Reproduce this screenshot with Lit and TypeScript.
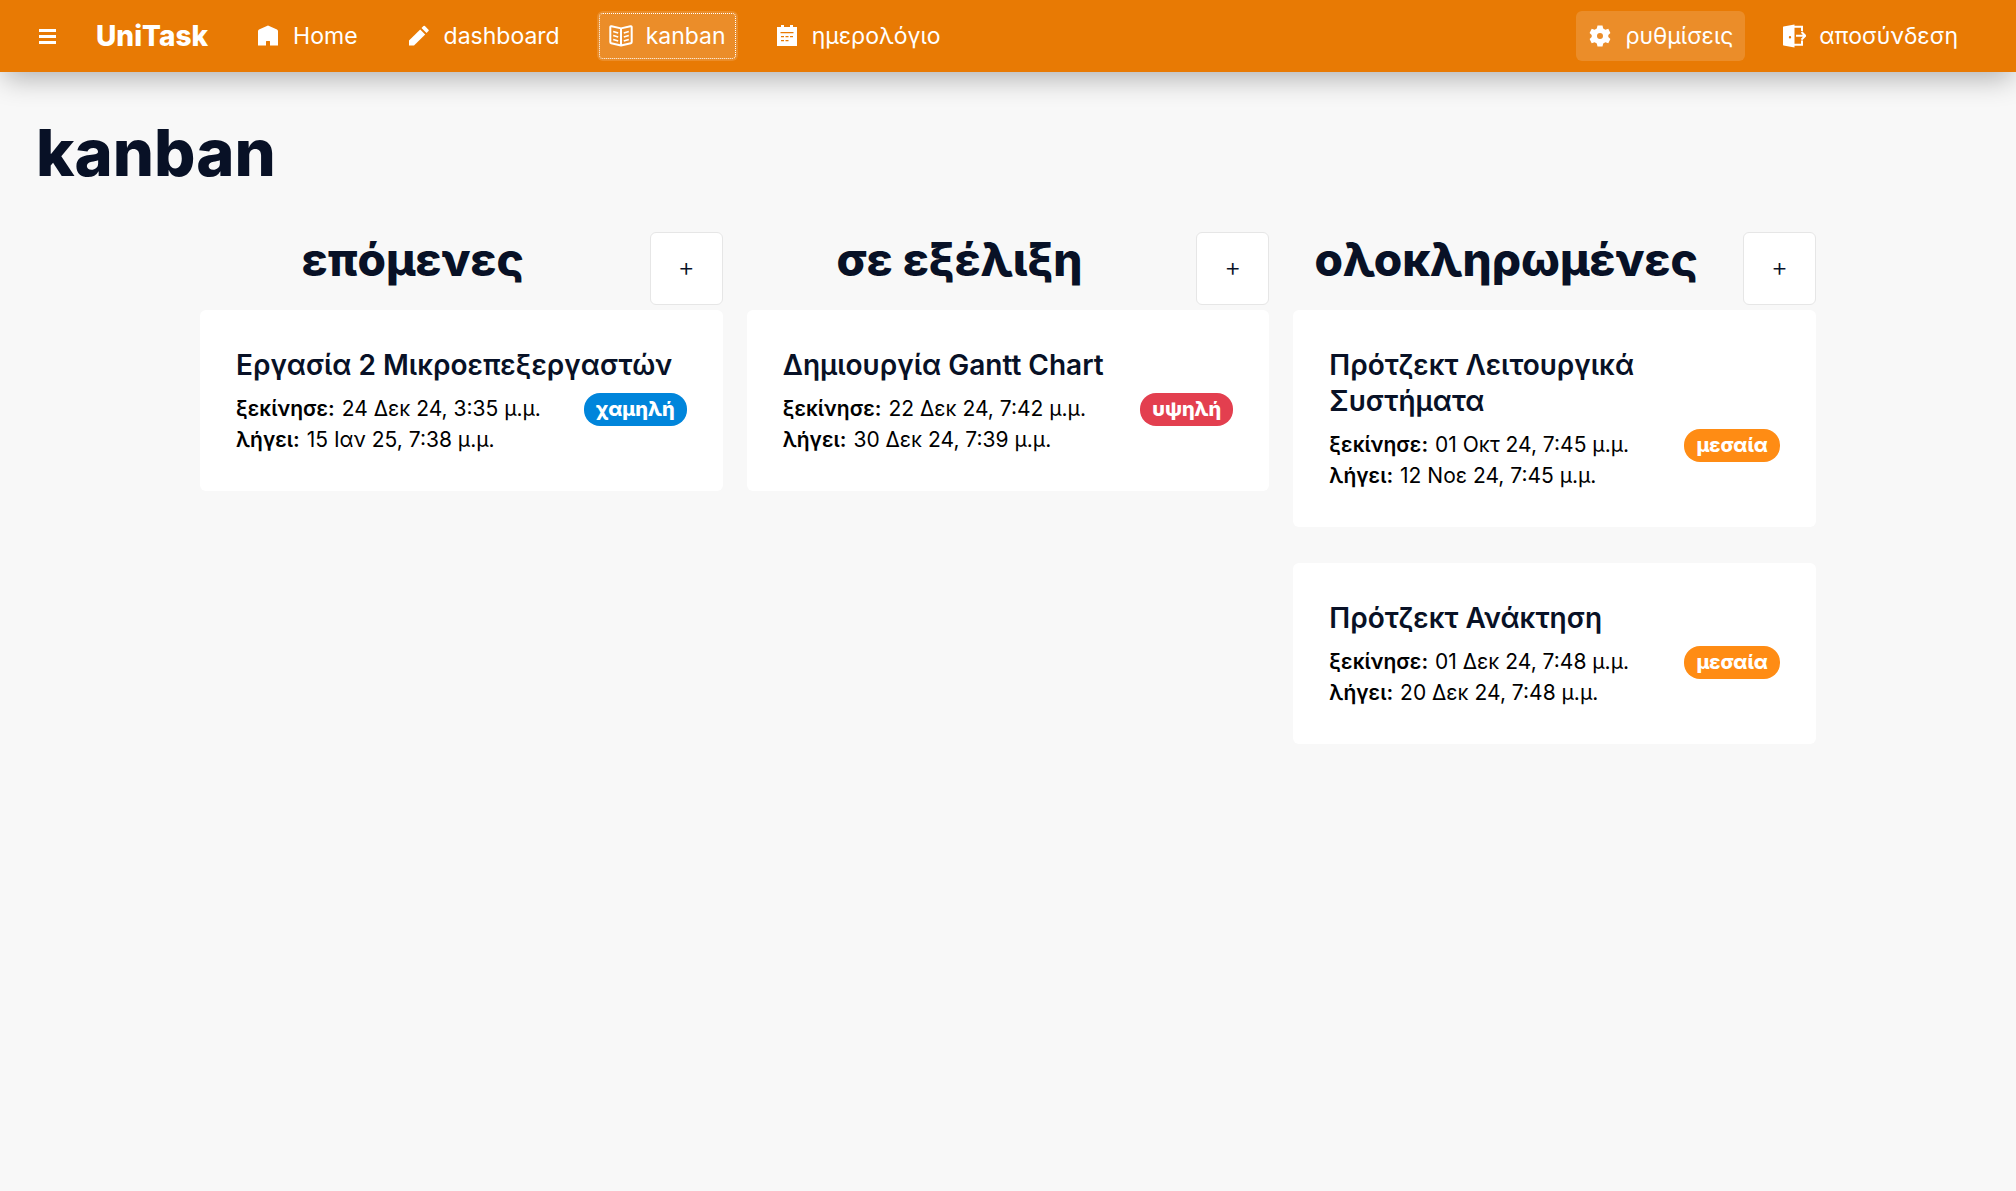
import { LitElement, html, css, svg, nothing, type SVGTemplateResult } from "lit";
import { customElement, property } from "lit/decorators.js";
import { classMap } from "lit/directives/class-map.js";

type Priority = "low" | "medium" | "high";

interface Task {
  title: string;
  started: string;
  due: string;
  priority: Priority;
}

interface Column {
  title: string;
  tasks: Task[];
}

interface NavItem {
  label: string;
  icon: SVGTemplateResult;
  state?: "current" | "hover";
}

const PRIORITY_LABELS: Record<Priority, string> = {
  low: "χαμηλή",
  medium: "μεσαία",
  high: "υψηλή",
};

const icons = {
  menu: svg`<path d="M3 5h17v3H3zM3 11h17v3H3zM3 17h17v3H3z" />`,
  home: svg`<path d="M12 1.5 21 5.6Q22 6.2 22 7.2V21.5H14V17.5Q14 17 13.5 17H10.5Q10 17 10 17.5V21.5H2V7.2Q2 6.2 3 5.6Z" />`,
  pencil: svg`<path d="M2 21.5V16.5L13.2 5.4 18.2 10.4 7 21.5Z" /><path d="M14.5 4.1 16.500 2.1Q17.2 1.5 17.9 2.1L21.5 5.7Q22.2 6.4 21.5 7.1L19.5 9.1Z" />`,
  book: svg`<g fill="none" stroke="currentColor" stroke-width="2" stroke-linejoin="round">
    <path d="M12 4.4 2.600 2.2Q1.3 2 1.3 3.2V18Q1.3 19 2.2 19.2L12 21.5 21.8 19.200Q22.7 19 22.7 18V3.2Q22.7 2 21.4 2.2Z" />
    <path d="M12 4.4V21.5" />
    <path d="M4.200 7.4 9.200 9M4.200 11.4 9.200 13M4.200 15.4 9.200 17M19.800 7.4 14.800 9M19.800 11.4 14.800 13M19.800 15.4 14.800 17" stroke-width="1.600" />
  </g>`,
  calendar: svg`<path fill-rule="evenodd" d="M6 1h3v2h6V1h3v2h4v19H2V3h4ZM5.500 8v1.200h13V8ZM6 12v1.200h3V12ZM10.500 12v1.200h3V12ZM15 12v1.200h3V12ZM6 16v1.200h3V16ZM10.500 16v1.200h3V16Z" />`,
  gear: svg`<path fill-rule="evenodd" d="M9.500 1.500H14.500L15.200 4.400 17.400 5.700 20.300 4.800 22.400 9 20.300 11V13L22.400 15 20.300 19.200 17.400 18.300 15.200 19.600 14.500 22.500H9.500L8.800 19.600 6.600 18.300 3.700 19.200 1.600 15 3.700 13V11L1.600 9 3.700 4.800 6.600 5.700 8.800 4.400ZM12 9A3 3 0 1 0 12 15A3 3 0 1 0 12 9Z" />`,
  logout: svg`<path fill-rule="evenodd" d="M12.500 .500V23.500L1.500 21.500Q1 21.400 1 20.800V3.200Q1 2.600 1.500 2.500ZM8 12A1.200 1.200 0 1 0 8 14.400A1.200 1.200 0 1 0 8 12Z" />
    <path fill="none" stroke="currentColor" stroke-width="2" d="M12 2.800H20V7M12 20.800H20V16.500M14 11.800H23M19.500 8 23.300 11.800 19.500 15.600" />`,
};

const MAIN_NAV: NavItem[] = [
  { label: "Home", icon: icons.home },
  { label: "dashboard", icon: icons.pencil },
  { label: "kanban", icon: icons.book, state: "current" },
  { label: "ημερολόγιο", icon: icons.calendar },
];

const ACCOUNT_NAV: NavItem[] = [
  { label: "ρυθμίσεις", icon: icons.gear, state: "hover" },
  { label: "αποσύνδεση", icon: icons.logout },
];

const COLUMNS: Column[] = [
  {
    title: "επόμενες",
    tasks: [
      { title: "Εργασία 2 Μικροεπεξεργαστών", started: "24 Δεκ 24, 3:35 μ.μ.", due: "15 Ιαν 25, 7:38 μ.μ.", priority: "low" },
    ],
  },
  {
    title: "σε εξέλιξη",
    tasks: [
      { title: "Δημιουργία Gantt Chart", started: "22 Δεκ 24, 7:42 μ.μ.", due: "30 Δεκ 24, 7:39 μ.μ.", priority: "high" },
    ],
  },
  {
    title: "ολοκληρωμένες",
    tasks: [
      { title: "Πρότζεκτ Λειτουργικά Συστήματα", started: "01 Οκτ 24, 7:45 μ.μ.", due: "12 Νοε 24, 7:45 μ.μ.", priority: "medium" },
      { title: "Πρότζεκτ Ανάκτηση", started: "01 Δεκ 24, 7:48 μ.μ.", due: "20 Δεκ 24, 7:48 μ.μ.", priority: "medium" },
    ],
  },
];

@customElement("task-card")
export class TaskCard extends LitElement {
  @property({ attribute: false }) task!: Task;

  static styles = css`
    :host {
      display: block;
    }
    .card {
      background: #fff;
      border-radius: 6px;
      padding: 37px 36px 36px;
    }
    .title {
      margin: 0 0 10px;
      color: #081126;
      font-size: 28px;
      font-weight: 600;
      line-height: 36px;
    }
    .details {
      display: flex;
      justify-content: space-between;
      align-items: flex-start;
      gap: 12px;
    }
    .dates {
      margin: 0;
      color: #000;
      font-size: 21px;
      line-height: 31px;
    }
    .date {
      display: flex;
      gap: 7px;
    }
    .date dt {
      font-weight: 600;
    }
    .date dd {
      margin: 0;
    }
    .badge {
      padding: 0 12px;
      border-radius: 16px;
      color: #fff;
      font-size: 20px;
      font-weight: 800;
      line-height: 33px;
    }
    .low {
      background: #0085db;
    }
    .medium {
      background: #ff8c14;
    }
    .high {
      background: #e33f4f;
    }
  `;

  render() {
    const { title, started, due, priority } = this.task;
    return html`
      <article class="card">
        <h3 class="title">${title}</h3>
        <div class="details">
          <dl class="dates">
            <div class="date"><dt>ξεκίνησε:</dt><dd>${started}</dd></div>
            <div class="date"><dt>λήγει:</dt><dd>${due}</dd></div>
          </dl>
          <span class="badge ${priority}">${PRIORITY_LABELS[priority]}</span>
        </div>
      </article>
    `;
  }
}

@customElement("app-root")
export class AppRoot extends LitElement {
  static styles = css`
    :host {
      display: flex;
      flex-direction: column;
      min-height: 100vh;
      background: #f8f8f8;
      color: #081126;
      font-family: Inter, "Noto Sans", sans-serif;
    }
    .bar {
      display: flex;
      align-items: center;
      gap: 12px;
      min-height: 72px;
      padding: 0 46px 0 24px;
      background: #e87a04;
      box-shadow: 0 10px 28px -4px rgba(0, 0, 0, 0.3);
      color: #fff;
    }
    .icon {
      display: block;
      flex: none;
      width: 24px;
      height: 24px;
      fill: currentColor;
    }
    .menu {
      padding: 12px;
      border: 0;
      background: none;
      color: inherit;
      cursor: pointer;
    }
    .brand {
      padding: 0 12px;
      color: inherit;
      font-size: 28px;
      font-weight: 800;
      line-height: 36px;
      text-decoration: none;
    }
    .nav {
      display: flex;
      gap: 25px;
      margin-left: 12px;
    }
    .account {
      margin-left: auto;
    }
    .link {
      display: flex;
      align-items: center;
      gap: 13px;
      height: 50px;
      padding: 0 12px;
      border-radius: 6px;
      color: inherit;
      font-size: 23px;
      line-height: 36px;
      text-decoration: none;
    }
    .lit {
      background: rgba(255, 255, 255, 0.15);
    }
    .current {
      outline: 1px dotted #fff;
      outline-offset: -3px;
    }
    .page {
      flex: 1;
      padding: 45px 36px;
    }
    .heading {
      margin: 0 0 43px;
      font-size: 65px;
      font-weight: 800;
      line-height: 72px;
    }
    .board {
      display: grid;
      grid-template-columns: repeat(3, 1fr);
      align-items: start;
      gap: 24px;
      max-width: 1616px;
      margin: 0 auto;
    }
    .head {
      display: flex;
      align-items: flex-start;
      gap: 24px;
      margin-bottom: 5px;
    }
    .name {
      flex: 1;
      margin: 0;
      font-size: 46px;
      font-weight: 800;
      line-height: 54px;
      text-align: center;
    }
    .add {
      width: 73px;
      height: 73px;
      padding: 0 0 4px;
      border: 1px solid #e6e6e6;
      border-radius: 6px;
      background: #fff;
      color: #081126;
      font: inherit;
      font-size: 26px;
      font-weight: 300;
      cursor: pointer;
    }
    .tasks {
      display: grid;
      gap: 36px;
    }
  `;

  private icon(shape: SVGTemplateResult) {
    return html`<svg class="icon" viewBox="0 0 24 24" aria-hidden="true">${shape}</svg>`;
  }

  private link(item: NavItem) {
    const current = item.state === "current";
    return html`
      <a
        class=${classMap({ link: true, lit: item.state !== undefined, current })}
        href="#"
        aria-current=${current ? "page" : nothing}
        >${this.icon(item.icon)}<span>${item.label}</span></a
      >
    `;
  }

  private column(column: Column) {
    return html`
      <section>
        <header class="head">
          <h2 class="name">${column.title}</h2>
          <button class="add" type="button">+</button>
        </header>
        <div class="tasks">
          ${column.tasks.map((task) => html`<task-card .task=${task}></task-card>`)}
        </div>
      </section>
    `;
  }

  render() {
    return html`
      <header class="bar">
        <button class="menu" type="button" aria-label="Menu">${this.icon(icons.menu)}</button>
        <a class="brand" href="#">UniTask</a>
        <nav class="nav">${MAIN_NAV.map((item) => this.link(item))}</nav>
        <nav class="nav account">${ACCOUNT_NAV.map((item) => this.link(item))}</nav>
      </header>
      <main class="page">
        <h1 class="heading">kanban</h1>
        <div class="board">${COLUMNS.map((column) => this.column(column))}</div>
      </main>
    `;
  }
}
